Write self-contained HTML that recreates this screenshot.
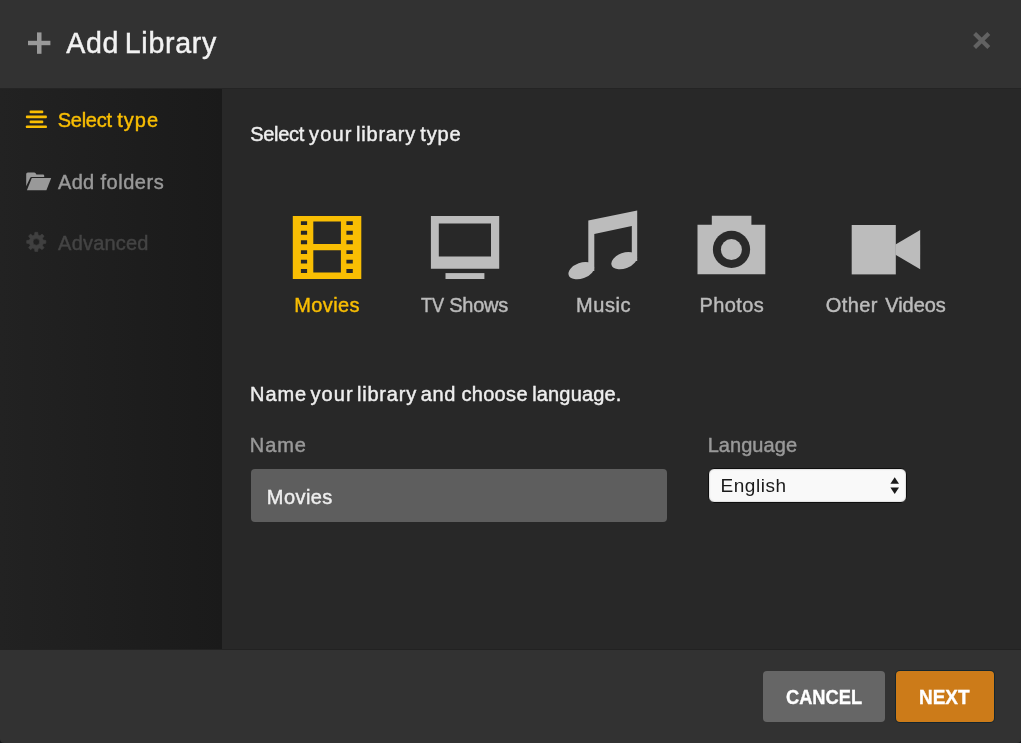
<!DOCTYPE html>
<html lang="en">
<head>
<meta charset="utf-8">
<title>Add Library</title>
<style>
*{box-sizing:border-box;margin:0;padding:0}
html,body{width:1021px;height:743px;overflow:hidden}
html{background:#15171a}
body{font-family:"Liberation Sans",sans-serif;position:relative;color:#eee;-webkit-font-smoothing:antialiased}
.abs{position:absolute}
.t{position:absolute;left:0;white-space:nowrap;line-height:1;-webkit-text-stroke:0.45px currentColor}
.t span{position:absolute;top:0}
.k{color:#1a1a1a;-webkit-text-stroke:0}
#header{left:0;top:0;width:1021px;height:88px;background:#323232}
#hline{left:0;top:88px;width:1021px;height:1px;background:#242424}
#sidebar{left:0;top:89px;width:222.5px;height:561px;background:linear-gradient(to right,#222222,#1a1a1a)}
#main{left:222px;top:89px;width:799px;height:561px;background:#282828}
#fline{left:0;top:649px;width:1021px;height:1px;background:#222}
#footer{left:0;top:650px;width:1021px;height:93px;background:#323232;border-radius:0 0 4px 4px}
.y{color:#f9be03}
.g{color:#999}
.d{color:#444}
.l{color:#bbb}
#name{left:250.8px;top:468.8px;width:415.8px;height:53px;background:#5e5e5e;border-radius:4px}
#select{left:708px;top:468px;width:199px;height:35px;background:#f9f9f9;border:1px solid #0e0e0e;border-radius:6px;box-shadow:inset 0 0 1.5px rgba(0,0,0,.5)}
#cancel{left:763px;top:671px;width:122px;height:51px;background:#666;border-radius:4px}
#next{left:896px;top:671px;width:97.5px;height:51px;background:#cc7b19;border-radius:4px;box-shadow:0 0 0 1px #15262e}
.b{font-weight:700;color:#fff;-webkit-text-stroke:0.35px #fff}
svg{position:absolute;left:0;top:0;width:1021px;height:743px;pointer-events:none}
</style>
</head>
<body>
<div id="header" class="abs"></div>
<div id="sidebar" class="abs"></div>
<div id="main" class="abs"></div>
<div id="hline" class="abs"></div>
<div id="footer" class="abs"></div>
<div id="fline" class="abs"></div>

<div id="name" class="abs"></div>
<div id="select" class="abs"></div>
<div id="cancel" class="abs"></div>
<div id="next" class="abs"></div>

<svg viewBox="0 0 1021 743">
  <!-- plus -->
  <g fill="#999">
    <rect x="28" y="40.8" width="22.4" height="4.4"/>
    <rect x="37" y="32.4" width="4.5" height="21.4"/>
  </g>
  <!-- close -->
  <g stroke="#626262" stroke-width="4.2" stroke-linecap="butt">
    <line x1="974.6" y1="33.4" x2="988.8" y2="47.6"/>
    <line x1="988.8" y1="33.4" x2="974.6" y2="47.6"/>
  </g>
  <!-- align-center -->
  <g fill="#f9be03">
    <rect x="29.6" y="110.5" width="13.7" height="2.7" rx="0.9"/>
    <rect x="25.9" y="115.5" width="21" height="2.7" rx="0.9"/>
    <rect x="29.6" y="120.5" width="13.7" height="2.7" rx="0.9"/>
    <rect x="25.9" y="125.4" width="21" height="2.7" rx="0.9"/>
  </g>
  <!-- folder open -->
  <g fill="#999">
    <path d="M26.2 186.2 L26.2 174 Q26.2 172.4 27.8 172.4 L34 172.4 Q35.3 172.4 35.8 173.4 L36.4 174.4 L43 174.4 Q44.2 174.4 44.2 175.6 L44.2 176.9 L31.6 176.9 Q30.6 176.9 30.1 177.9 Z"/>
    <path d="M31.8 178 L51.2 178 L46.4 190.2 L26.9 190.2 Z"/>
  </g>
  <!-- gear -->
  <g id="gear" fill="#404040" transform="translate(36.3 241.9)">
    <path fill-rule="evenodd" stroke="#404040" stroke-width="0.6" stroke-linejoin="round" d="M-1.78 -6.87 L-1.43 -9.59 L1.43 -9.59 L1.78 -6.87 L3.60 -6.12 L5.77 -7.80 L7.80 -5.77 L6.12 -3.60 L6.87 -1.78 L9.59 -1.43 L9.59 1.43 L6.87 1.78 L6.12 3.60 L7.80 5.77 L5.77 7.80 L3.60 6.12 L1.78 6.87 L1.43 9.59 L-1.43 9.59 L-1.78 6.87 L-3.60 6.12 L-5.77 7.80 L-7.80 5.77 L-6.12 3.60 L-6.87 1.78 L-9.59 1.43 L-9.59 -1.43 L-6.87 -1.78 L-6.12 -3.60 L-7.80 -5.77 L-5.77 -7.80 L-3.60 -6.12 Z M0 -3.3 A3.3 3.3 0 1 0 0 3.3 A3.3 3.3 0 1 0 0 -3.3 Z"/>
  </g>
  <!-- film -->
  <g>
    <path fill="#f9be03" fill-rule="evenodd" d="M292.8 215.9 H361.3 V278.9 H292.8 Z
      M313.3 221.4 H340.9 V243.9 H313.3 Z
      M313.3 250.2 H340.9 V272.6 H313.3 Z
      M300.9 221.15 h6.2 v3.9 h-6.2 Z M300.9 230.85 h6.2 v3.9 h-6.2 Z M300.9 240.30 h6.2 v3.9 h-6.2 Z M300.9 250.15 h6.2 v3.9 h-6.2 Z M300.9 259.70 h6.2 v3.9 h-6.2 Z M300.9 269.10 h6.2 v3.9 h-6.2 Z
      M346.4 221.15 h6.4 v3.9 h-6.4 Z M346.4 230.85 h6.4 v3.9 h-6.4 Z M346.4 240.30 h6.4 v3.9 h-6.4 Z M346.4 250.15 h6.4 v3.9 h-6.4 Z M346.4 259.70 h6.4 v3.9 h-6.4 Z M346.4 269.10 h6.4 v3.9 h-6.4 Z"/>
  </g>
  <!-- tv -->
  <g fill="#bcbcbc">
    <path fill-rule="evenodd" d="M430.9 216.1 H499.2 V268.8 H430.9 Z M438.8 223.6 H491 V256.4 H438.8 Z"/>
    <rect x="445.5" y="273.1" width="38.9" height="5.9"/>
  </g>
  <!-- music -->
  <g fill="#bcbcbc">
    <path d="M588.3 220.6 L637.2 210.6 L637.2 261 L631.8 261 L631.8 226.1 L594.3 234.1 L594.3 271 L588.3 271 Z"/>
    <ellipse cx="581.3" cy="270.7" rx="13.4" ry="7.8" transform="rotate(-20 581.3 270.7)"/>
    <ellipse cx="624.2" cy="260.6" rx="13.4" ry="7.8" transform="rotate(-20 624.2 260.6)"/>
  </g>
  <!-- camera -->
  <g>
    <path fill="#bcbcbc" d="M697.5 224.8 H711.8 V215.7 H751.4 V224.8 H765.3 V274.3 H697.5 Z"/>
    <circle cx="731.5" cy="249.4" r="18.6" fill="#2a2a2a"/>
    <circle cx="731.4" cy="249.6" r="10.5" fill="#bcbcbc"/>
  </g>
  <!-- video -->
  <g fill="#bcbcbc">
    <rect x="851.7" y="225" width="44.1" height="49.4"/>
    <path d="M895.5 244.5 L920.2 230 L920.2 269.2 L895.5 254.7 Z"/>
  </g>
  <!-- select arrows -->
  <g fill="#1a1a1a">
    <path d="M890.4 483.8 L894.7 477.3 L899 483.8 Z"/>
    <path d="M890.4 487.6 L894.7 494 L899 487.6 Z"/>
  </g>
</svg>

<div id="texts" style="position:absolute;left:0;top:0;width:1021px;height:743px;will-change:transform">
<div class="t" id="title" style="top:29px;font-size:28.6px;color:#f2f2f2"><span style="left:66.30px;letter-spacing:0.56px">Add</span> <span style="left:124.77px;letter-spacing:0.70px">Library</span></div>
<div class="t y" id="s1" style="top:110px;font-size:20px"><span style="left:57.67px;letter-spacing:-0.23px">Select</span> <span style="left:117.30px;letter-spacing:0.97px">type</span></div>
<div class="t g" id="s2" style="top:172px;font-size:20px"><span style="left:58.10px;letter-spacing:0.27px">Add</span> <span style="left:100.40px;letter-spacing:0.55px">folders</span></div>
<div class="t d" id="s3" style="top:233px;font-size:20px"><span style="left:58.10px;letter-spacing:0.20px">Advanced</span></div>
<div class="t" id="h1" style="top:124px;font-size:20px"><span style="left:250.28px;letter-spacing:-0.31px">Select</span> <span style="left:309.10px;letter-spacing:1.16px">your</span> <span style="left:356.05px;letter-spacing:0.78px">library</span> <span style="left:420.20px;letter-spacing:0.90px">type</span></div>
<div class="t y" id="l1" style="top:295px;font-size:20px"><span style="left:294.14px;letter-spacing:0.43px">Movies</span></div>
<div class="t l" id="l2" style="top:295px;font-size:20px"><span style="left:421.12px;transform:scaleX(0.9076);transform-origin:0 0">TV</span> <span style="left:449.18px;letter-spacing:-0.22px">Shows</span></div>
<div class="t l" id="l3" style="top:295px;font-size:20px"><span style="left:576.04px;letter-spacing:0.54px">Music</span></div>
<div class="t l" id="l4" style="top:295px;font-size:20px"><span style="left:699.44px;letter-spacing:0.40px">Photos</span></div>
<div class="t l" id="l5" style="top:295px;font-size:20px"><span style="left:825.66px;letter-spacing:0.45px">Other</span> <span style="left:885.30px;letter-spacing:-0.07px">Videos</span></div>
<div class="t" id="h2" style="top:384px;font-size:20px"><span style="left:250.04px;letter-spacing:0.91px">Name</span> <span style="left:310.50px;letter-spacing:1.10px">your</span> <span style="left:356.95px;letter-spacing:0.80px">library</span> <span style="left:420.68px;letter-spacing:0.64px">and</span> <span style="left:461.38px;letter-spacing:0.33px">choose</span> <span style="left:532.15px;letter-spacing:0.17px">language.</span></div>
<div class="t g" id="lb1" style="top:435px;font-size:20px"><span style="left:249.84px;letter-spacing:0.94px">Name</span></div>
<div class="t g" id="lb2" style="top:435px;font-size:20px"><span style="left:707.64px;letter-spacing:0.06px">Language</span></div>
<div class="t" id="in1" style="top:487px;font-size:20px"><span style="left:266.84px;letter-spacing:0.43px">Movies</span></div>
<div class="t k" id="in2" style="top:476px;font-size:19px"><span style="left:720.52px;letter-spacing:0.54px">English</span></div>
<div class="t b" id="b1" style="top:687px;font-size:20px"><span style="left:785.73px;transform:scaleX(0.9130);transform-origin:0 0">CANCEL</span></div>
<div class="t b" id="b2" style="top:687px;font-size:20px"><span style="left:918.91px;transform:scaleX(0.9489);transform-origin:0 0">NEXT</span></div>
</div>
</body>
</html>
